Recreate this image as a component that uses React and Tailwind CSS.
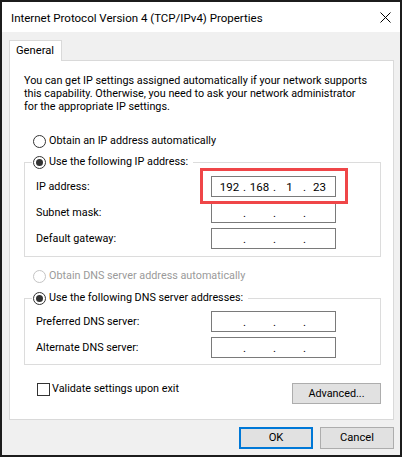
import React from "react";

const font = { fontFamily: 'Roboto, "Noto Sans", sans-serif' };

function Radio({ checked, disabled, children }) {
  return (
    <div className={`flex items-center gap-[3px] h-[16px] ${disabled ? "text-[#9a9a9a]" : "text-black"}`}>
      <div
        className={`w-[13px] h-[13px] rounded-full border bg-white flex items-center justify-center ${
          disabled ? "border-[#c4c4c4]" : "border-[#333333]"
        }`}
      >
        {checked && <div className="w-[7px] h-[7px] rounded-full bg-[#333333]" />}
      </div>
      <span>{children}</span>
    </div>
  );
}

function IpBox({ parts }) {
  const p = parts || ["", "", "", ""];
  return (
    <div className="w-[125px] h-[21px] border border-[#7a7a7a] bg-white flex items-center pl-[5px] text-[11.5px]">
      {p.map((v, i) => (
        <React.Fragment key={i}>
          <span className="w-[25px] text-center">{v}</span>
          {i < 3 && <span className="w-[5px] text-center">.</span>}
        </React.Fragment>
      ))}
    </div>
  );
}

function Row({ label, parts, highlight }) {
  return (
    <div className="flex items-center h-[21px] pl-[4px]">
      <span className="w-[175px]">{label}</span>
      {highlight ? (
        <div className="relative">
          <div className="absolute left-[-11px] top-[-8px] w-[148px] h-[36px] border-[3px] border-[#ef4648]" />
          <IpBox parts={parts} />
        </div>
      ) : (
        <IpBox parts={parts} />
      )}
    </div>
  );
}

export default function App() {
  return (
    <div className="w-[404px] h-[459px] bg-white text-[10.8px] leading-[16px] text-black whitespace-nowrap" style={font}>
      <div className="w-[402px] h-[457px] border-2 border-[#1c1c1c] bg-[#f0f0f0] flex flex-col">
        {/* Title bar */}
        <div className="h-[30px] bg-white flex items-center justify-between pl-[9px] pr-[9px] shrink-0">
          <span className="mt-[1px] text-[11.5px]">Internet Protocol Version 4 (TCP/IPv4) Properties</span>
          <svg width="11" height="11" viewBox="0 0 11 11" className="mt-[1px]">
            <path d="M0.5 0.5 L10.5 10.5 M10.5 0.5 L0.5 10.5" stroke="#000" strokeWidth="1" fill="none" />
          </svg>
        </div>

        {/* Body */}
        <div className="flex flex-col pl-[7px] pt-[8px]">
          {/* Tab */}
          <div className="w-[53px] h-[21px] bg-white border border-b-0 border-[#d9d9d9] pl-[6px] leading-[19px] text-[11.2px] relative z-10 -mb-px">
            General
          </div>
          {/* Panel */}
          <div className="w-[385px] h-[360px] bg-white border border-[#d9d9d9] pl-[14px] pt-[13px] flex flex-col">
            <div className="flex flex-col">
              <span className="h-[13px] leading-[13px]">You can get IP settings assigned automatically if your network supports</span>
              <span className="h-[13px] leading-[13px]">this capability. Otherwise, you need to ask your network administrator</span>
              <span className="h-[13px] leading-[13px]">for the appropriate IP settings.</span>
            </div>

            <div className="mt-[20px] ml-[9px]">
              <Radio>Obtain an IP address automatically</Radio>
            </div>

            <fieldset className="mt-[5px] w-[357px] border border-[#dcdcdc] pl-[7px] pt-[6px] pb-[7px] flex flex-col gap-[5px]">
              <legend className="pl-[1px] pr-[5px]">
                <Radio checked>Use the following IP address:</Radio>
              </legend>
              <Row label="IP address:" parts={["192", "168", "1", "23"]} highlight />
              <Row label="Subnet mask:" />
              <Row label="Default gateway:" />
            </fieldset>

            <div className="mt-[11px] ml-[9px]">
              <Radio disabled>Obtain DNS server address automatically</Radio>
            </div>

            <fieldset className="mt-[6px] w-[357px] border border-[#dcdcdc] pl-[7px] pt-[5px] pb-[6px] flex flex-col gap-[5px]">
              <legend className="pl-[1px] pr-[5px]">
                <Radio checked>Use the following DNS server addresses:</Radio>
              </legend>
              <Row label="Preferred DNS server:" />
              <Row label="Alternate DNS server:" />
            </fieldset>

            <div className="mt-[16px] w-[357px] flex justify-between items-start">
              <div className="ml-[13px] flex items-center gap-[2px] h-[16px]">
                <div className="w-[13px] h-[13px] border border-[#333333] bg-white" />
                <span>Validate settings upon exit</span>
              </div>
              <button className="mt-[2px] w-[89px] h-[21px] bg-[#e1e1e1] border border-[#adadad] flex items-center justify-center">
                Advanced...
              </button>
            </div>
          </div>
        </div>

        {/* Bottom buttons */}
        <div className="flex justify-end gap-[7px] pr-[6px] mt-[7px]">
          <button className="w-[74px] h-[22px] bg-[#e1e1e1] border-2 border-[#0078d7] flex items-center justify-center text-[11.2px]">
            OK
          </button>
          <button className="w-[74px] h-[22px] bg-[#e1e1e1] border border-[#adadad] flex items-center justify-center text-[11.2px]">
            Cancel
          </button>
        </div>
      </div>
    </div>
  );
}
